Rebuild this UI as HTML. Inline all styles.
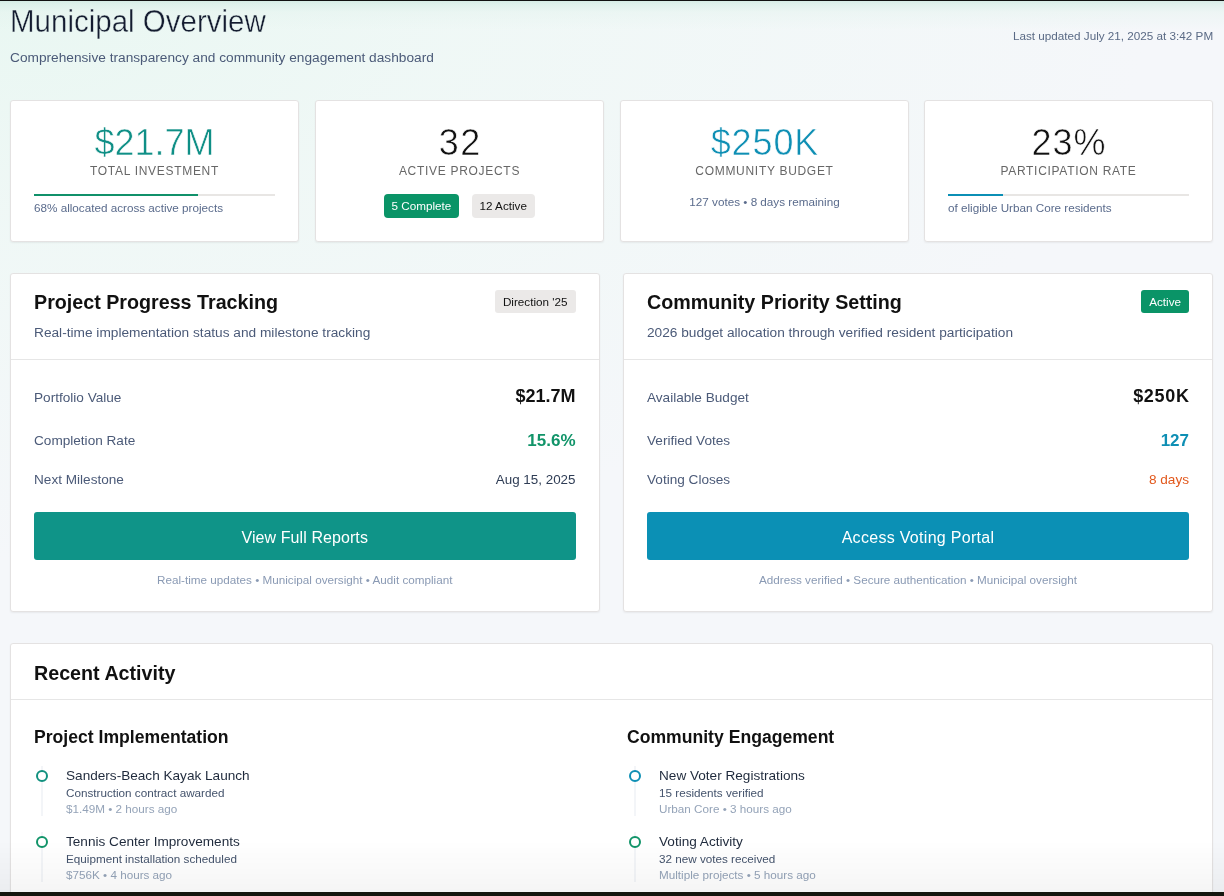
<!DOCTYPE html>
<html><head><meta charset="utf-8">
<style>
*{box-sizing:border-box;margin:0;padding:0}
html,body{width:1224px;height:896px;overflow:hidden}
.card,.panel,h1,.sub,.upd{will-change:transform}
body{font-family:"Liberation Sans",sans-serif;position:relative;
background:linear-gradient(180deg,rgba(205,233,224,.85) 0px,rgba(215,238,231,.7) 4px,rgba(228,243,238,.45) 12px,rgba(240,248,245,0) 30px),
radial-gradient(ellipse 1150px 560px at 0px 0px,rgba(233,247,242,1) 0%,rgba(238,248,245,.8) 40%,rgba(245,247,250,0) 100%),
#f5f7fa;}
.topline{position:absolute;left:0;top:0;width:1224px;height:1px;background:#111}
.botline{position:absolute;left:0;top:892px;width:1224px;height:4px;background:#15170f}
.abs{position:absolute;white-space:nowrap}
h1{position:absolute;left:10px;top:4px;font-size:29.5px;font-weight:normal;color:#141c30;-webkit-text-stroke:0.4px #e7f4f0;transform:scaleY(1.07);transform-origin:0 27.7px;line-height:36px;white-space:nowrap}
.sub{position:absolute;left:10px;top:50px;font-size:13.7px;color:#4b5a78;line-height:16px;white-space:nowrap}
.upd{position:absolute;right:11px;top:29px;font-size:11.7px;color:#5a6a85;line-height:14px;white-space:nowrap}
.card{position:absolute;top:100px;width:289px;height:142px;background:#fff;border:1px solid #e4e2e2;border-radius:3px;box-shadow:0 1px 2px rgba(0,0,0,.06)}
.num{position:absolute;left:0;right:0;top:21.5px;text-align:center;font-size:36px;line-height:40px;color:#111;-webkit-text-stroke:0.6px #fff}
.lbl{position:absolute;left:0;right:0;top:63px;text-align:center;font-size:12px;line-height:14px;color:#676767;letter-spacing:0.7px}
.bar{position:absolute;left:23px;right:23px;top:93px;height:2px;background:#e8e6e4}
.bar i{position:absolute;left:0;top:0;height:2px}
.note{position:absolute;left:23px;top:100px;font-size:11.7px;line-height:14px;color:#5a6b8c;white-space:nowrap}
.panel{position:absolute;background:#fff;border:1px solid #e4e2e2;border-radius:3px;box-shadow:0 1px 2px rgba(0,0,0,.06)}
.ptitle{position:absolute;left:23px;top:17px;font-size:19.7px;font-weight:bold;color:#111;line-height:22px;white-space:nowrap}
.psub{position:absolute;left:23px;top:51px;font-size:13.7px;color:#4b5a78;line-height:16px;white-space:nowrap}
.divd{position:absolute;left:0;right:0;top:85px;height:1px;background:#e6e6e6}
.badge{position:absolute;top:16px;height:23px;border-radius:3px;font-size:11.7px;line-height:23px;padding:0 8px;white-space:nowrap}
.row{position:absolute;left:23px;right:23px;font-size:13.6px;line-height:16px;color:#4b5a78}
.row span{position:absolute;right:0;top:0;white-space:nowrap}
.btn{position:absolute;left:23px;right:23px;top:238px;height:48px;border-radius:3px;color:#fff;font-size:16px;text-align:center;line-height:51px}
.foot{position:absolute;left:0;right:0;top:299px;text-align:center;font-size:11.7px;line-height:14px;color:#8a9ab4;white-space:nowrap}
.col{position:absolute;top:80px;width:563px;height:220px}
.ctitle{position:absolute;left:0;top:3px;font-size:17.6px;font-weight:bold;color:#111;line-height:20px;white-space:nowrap}
.item{position:absolute;left:0;width:560px;height:60px}
.item b{position:absolute;left:2px;top:1px;width:12px;height:12px;border:2px solid #12917f;border-radius:50%;background:#fff;z-index:1}
.item em{position:absolute;left:7px;top:-3px;width:2px;height:50px;background:#f3f5f8}
.it{position:absolute;left:32px;top:-1px;font-size:13.6px;line-height:15px;color:#1f2a3c;white-space:nowrap}
.id{position:absolute;left:32px;top:17px;font-size:11.7px;line-height:14px;color:#44536c;white-space:nowrap}
.im{position:absolute;left:32px;top:33px;font-size:11.7px;line-height:14px;color:#94a3b8;white-space:nowrap}
.fade{position:absolute;left:0;top:840px;width:1224px;height:52px;background:linear-gradient(180deg,rgba(0,0,0,0),rgba(0,0,0,.04))}
</style></head><body>
<div class="topline"></div>
<h1>Municipal Overview</h1>
<div class="sub">Comprehensive transparency and community engagement dashboard</div>
<div class="upd">Last updated July 21, 2025 at 3:42 PM</div>

<div class="card" style="left:10px">
  <div class="num" style="color:#0f8f86">$21.7M</div>
  <div class="lbl">TOTAL INVESTMENT</div>
  <div class="bar"><i style="width:68%;background:#10916a"></i></div>
  <div class="note">68% allocated across active projects</div>
</div>
<div class="card" style="left:314.75px">
  <div class="num" style="letter-spacing:1.5px;text-indent:1.5px">32</div>
  <div class="lbl">ACTIVE PROJECTS</div>
  <div class="badge" style="left:67.5px;top:93px;height:24px;line-height:24px;border-radius:4px;background:#0a9467;color:#fff">5 Complete</div>
  <div class="badge" style="left:155.5px;top:93px;height:24px;line-height:24px;border-radius:4px;background:#ebe9e8;color:#111">12 Active</div>
</div>
<div class="card" style="left:619.5px">
  <div class="num" style="color:#0e8fb4;letter-spacing:.9px;text-indent:1px">$250K</div>
  <div class="lbl">COMMUNITY BUDGET</div>
  <div class="note" style="left:0;right:0;text-align:center;top:94px">127 votes • 8 days remaining</div>
</div>
<div class="card" style="left:924.25px">
  <div class="num" style="letter-spacing:1px;text-indent:1px">23%</div>
  <div class="lbl">PARTICIPATION RATE</div>
  <div class="bar"><i style="width:23%;background:#0b8fb5"></i></div>
  <div class="note">of eligible Urban Core residents</div>
</div>

<div class="panel" style="left:10px;top:273px;width:589.5px;height:339px">
  <div class="ptitle">Project Progress Tracking</div>
  <div class="badge" style="right:23px;background:#ebe9e8;color:#111">Direction '25</div>
  <div class="psub">Real-time implementation status and milestone tracking</div>
  <div class="divd"></div>
  <div class="row" style="top:116px">Portfolio Value<span style="font-size:18px;font-weight:bold;color:#111;top:-2px">$21.7M</span></div>
  <div class="row" style="top:159px">Completion Rate<span style="font-size:17px;font-weight:bold;color:#119469;top:-0.5px">15.6%</span></div>
  <div class="row" style="top:198px">Next Milestone<span style="color:#2f3d55;font-size:13.4px">Aug 15, 2025</span></div>
  <div class="btn" style="background:#0f9488;letter-spacing:.08px">View Full Reports</div>
  <div class="foot">Real-time updates • Municipal oversight • Audit compliant</div>
</div>
<div class="panel" style="left:623px;top:273px;width:590px;height:339px">
  <div class="ptitle">Community Priority Setting</div>
  <div class="badge" style="right:23px;background:#0a9467;color:#fff">Active</div>
  <div class="psub">2026 budget allocation through verified resident participation</div>
  <div class="divd"></div>
  <div class="row" style="top:116px">Available Budget<span style="font-size:18px;font-weight:bold;color:#111;top:-2px;letter-spacing:.7px;right:-.7px">$250K</span></div>
  <div class="row" style="top:159px">Verified Votes<span style="font-size:17px;font-weight:bold;color:#0e8fb4;top:-0.5px">127</span></div>
  <div class="row" style="top:198px">Voting Closes<span style="color:#e2581c">8 days</span></div>
  <div class="btn" style="background:#0b90b5;letter-spacing:.3px">Access Voting Portal</div>
  <div class="foot">Address verified • Secure authentication • Municipal oversight</div>
</div>

<div class="panel" style="left:10px;top:643px;width:1203px;height:300px">
  <div class="ptitle" style="top:18px">Recent Activity</div>
  <div class="divd" style="top:55px"></div>
  <div class="col" style="left:23px">
    <div class="ctitle">Project Implementation</div>
    <div class="item" style="top:45px"><b style="border-color:#12917f"></b><em></em>
      <div class="it">Sanders-Beach Kayak Launch</div><div class="id">Construction contract awarded</div><div class="im">$1.49M • 2 hours ago</div></div>
    <div class="item" style="top:111px"><b style="border-color:#119469"></b><em></em>
      <div class="it">Tennis Center Improvements</div><div class="id">Equipment installation scheduled</div><div class="im">$756K • 4 hours ago</div></div>
  </div>
  <div class="col" style="left:616px">
    <div class="ctitle">Community Engagement</div>
    <div class="item" style="top:45px"><b style="border-color:#0e8fb4"></b><em></em>
      <div class="it">New Voter Registrations</div><div class="id">15 residents verified</div><div class="im">Urban Core • 3 hours ago</div></div>
    <div class="item" style="top:111px"><b style="border-color:#119469"></b><em></em>
      <div class="it">Voting Activity</div><div class="id">32 new votes received</div><div class="im">Multiple projects • 5 hours ago</div></div>
  </div>
</div>
<div class="fade"></div>

<div class="botline"></div>
</body></html>
